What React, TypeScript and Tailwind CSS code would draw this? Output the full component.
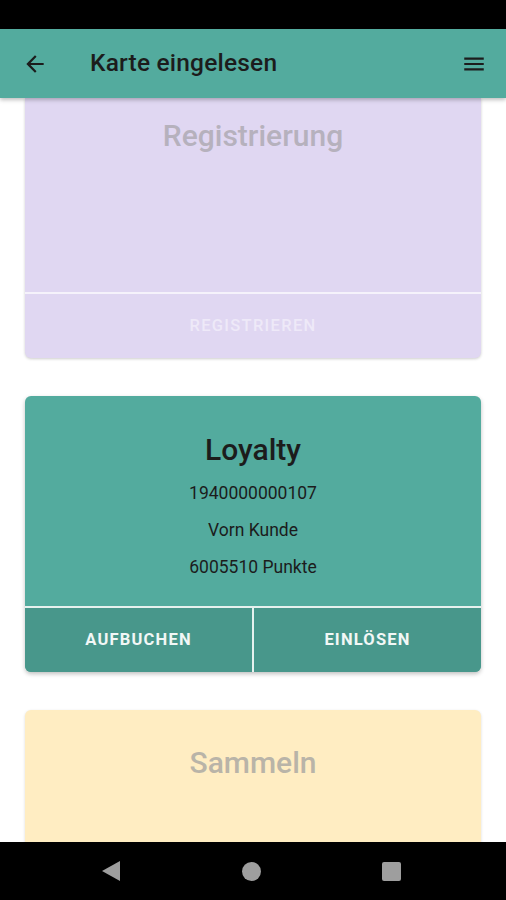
import React from "react";

function BackArrow() {
  return (
    <svg width="26" height="26" viewBox="0 0 24 24" fill="#1c1c1c">
      <path d="M20 11H7.83l5.59-5.59L12 4l-8 8 8 8 1.41-1.41L7.83 13H20v-2z" />
    </svg>
  );
}

function Menu() {
  return (
    <svg width="26" height="26" viewBox="0 0 24 24" fill="#1c1c1c">
      <path d="M3 18h18v-2H3v2zm0-5h18v-2H3v2zm0-7v2h18V6H3z" />
    </svg>
  );
}

export default function App() {
  return (
    <div
      className="w-[506px] h-[900px] flex flex-col overflow-hidden bg-white"
      style={{ fontFamily: "Roboto, 'Noto Sans', sans-serif" }}
    >
      <div className="h-[29px] bg-black shrink-0" />
      <div className="h-[69px] shrink-0 bg-[#53ab9e] flex items-center px-[22px] relative z-10 shadow-[0_2px_4px_rgba(0,0,0,0.25)]">
        <BackArrow />
        <div className="ml-[42px] text-[24.5px] font-medium text-[#1c1c1c] tracking-[0.2px]">Karte eingelesen</div>
        <div className="ml-auto mr-[-3px]">
          <Menu />
        </div>
      </div>
      <div className="flex-1 overflow-hidden px-[25px] flex flex-col gap-[38px]">
        {/* Registrierung card (scrolled) */}
        <div className="shrink-0 bg-[#e0d7f2] rounded-b-[6px] shadow-[0_1px_3px_rgba(0,0,0,0.2)] flex flex-col">
          <div className="h-[194px] flex flex-col items-center pt-[20px]">
            <div className="text-[30px] leading-[36px] font-medium text-[#b6b1bd]">Registrierung</div>
          </div>
          <div className="h-[2px] bg-[#f5f2fb]" />
          <div className="h-[64px] flex items-center justify-center text-[16.5px] font-medium tracking-[1.3px] text-[#eee9f8]">
            REGISTRIEREN
          </div>
        </div>
        {/* Loyalty card */}
        <div className="shrink-0 rounded-[6px] overflow-hidden shadow-[0_2px_4px_rgba(0,0,0,0.25)] flex flex-col bg-[#53ab9e]">
          <div className="h-[210px] flex flex-col items-center pt-[36px] text-[#1c1c1c]">
            <div className="text-[30px] leading-[36px] font-medium">Loyalty</div>
            <div className="mt-[14px] text-[17.5px] leading-[22px]">1940000000107</div>
            <div className="mt-[15px] text-[17.5px] leading-[22px]">Vorn Kunde</div>
            <div className="mt-[15px] text-[17.5px] leading-[22px]">6005510 Punkte</div>
          </div>
          <div className="h-[2px] bg-[#e6f1ee]" />
          <div className="h-[64px] flex bg-[#48978b]">
            <div className="flex-1 flex items-center justify-center text-[16.5px] font-bold tracking-[1.2px] text-[#f2f7f6]">
              AUFBUCHEN
            </div>
            <div className="w-[2px] bg-[#e6f1ee]" />
            <div className="flex-1 flex items-center justify-center text-[16.5px] font-bold tracking-[1.2px] text-[#f2f7f6]">
              EINLÖSEN
            </div>
          </div>
        </div>
        {/* Sammeln card */}
        <div className="shrink-0 h-[200px] rounded-[6px] bg-[#ffedc2] shadow-[0_1px_3px_rgba(0,0,0,0.15)] flex flex-col items-center pt-[35px]">
          <div className="text-[30px] leading-[36px] font-medium text-[#b9b4a8]">Sammeln</div>
        </div>
      </div>
      <div className="h-[58px] shrink-0 bg-black flex items-center justify-center gap-[121px] relative z-10">
        <svg width="20" height="22" viewBox="0 0 20 22" className="ml-[-4px]">
          <polygon points="1,11 19,1 19,21" fill="#9e9e9e" />
        </svg>
        <div className="w-[19px] h-[19px] rounded-full bg-[#9e9e9e]" />
        <div className="w-[19px] h-[19px] rounded-[2px] bg-[#9e9e9e]" />
      </div>
    </div>
  );
}
